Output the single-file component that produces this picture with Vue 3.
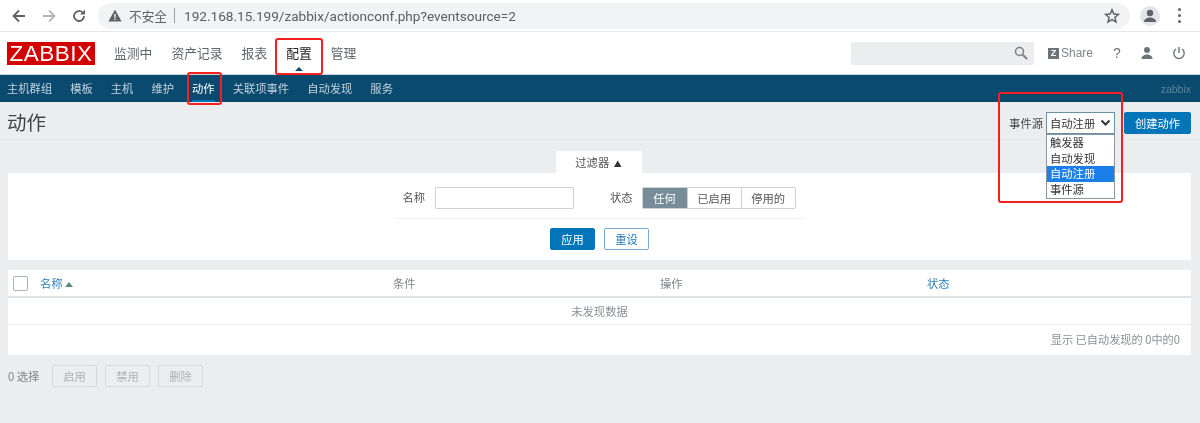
<script setup>
const mainNav = [
  { t: '监测中' }, { t: '资产记录' }, { t: '报表' }, { t: '配置', on: true }, { t: '管理' }
]
const subNav = [
  { t: '主机群组' }, { t: '模板' }, { t: '主机' }, { t: '维护' }, { t: '动作', on: true },
  { t: '关联项事件' }, { t: '自动发现' }, { t: '服务' }
]
const options = ['触发器', '自动发现', '自动注册', '事件源']
</script>

<template>
  <div class="page">
    <div class="chrome">
      <div class="navicons">
        <svg width="16" height="16" viewBox="0 0 16 16"><path d="M14 8H3M8 2.500 2.500 8 8 13.500" fill="none" stroke="#5f6368" stroke-width="1.800"/></svg>
        <svg width="16" height="16" viewBox="0 0 16 16"><path d="M2 8h11M8 2.500 13.500 8 8 13.500" fill="none" stroke="#b4b7ba" stroke-width="1.800"/></svg>
        <svg width="16" height="16" viewBox="0 0 16 16"><path d="M13 8a5 5 0 1 1-1.600-3.700" fill="none" stroke="#5f6368" stroke-width="1.800"/><path d="M14 1.500v5H9z" fill="#5f6368"/></svg>
      </div>
      <div class="omnibox">
        <svg class="warn" width="14" height="13" viewBox="0 0 14 13"><path d="M7 .5 13.600 12.500H.4z" fill="#5f6368"/><rect x="6.300" y="4.800" width="1.400" height="4" fill="#f1f3f4"/><rect x="6.300" y="9.600" width="1.400" height="1.400" fill="#f1f3f4"/></svg>
        <span class="insecure">不安全</span>
        <span class="sep"></span>
        <span class="url">192.168.15.199/zabbix/actionconf.php?eventsource=2</span>
        <svg class="star" width="16" height="16" viewBox="0 0 16 16"><path d="M8 1.800 9.800 6l4.600.4-3.500 3 1.100 4.500L8 11.500l-4 2.400 1.100-4.500-3.500-3L6.200 6z" fill="none" stroke="#5f6368" stroke-width="1.500"/></svg>
      </div>
      <div class="avatar">
        <svg width="14" height="14" viewBox="0 0 14 14"><circle cx="7" cy="4" r="3.200" fill="#5f6368"/><path d="M1 13c0-3 3-4.500 6-4.500s6 1.500 6 4.500z" fill="#5f6368"/></svg>
      </div>
      <div class="kebab"><i></i><i></i><i></i></div>
    </div>

    <header class="top">
      <div class="logo">ZABBIX</div>
      <nav class="mainnav">
        <a v-for="n in mainNav" :key="n.t" :class="{ on: n.on }">{{ n.t }}</a>
      </nav>
      <div class="topright">
        <div class="search">
          <svg width="14" height="14" viewBox="0 0 14 14"><circle cx="5.500" cy="5.500" r="4" fill="none" stroke="#7a7f83" stroke-width="1.500"/><path d="M8.500 8.500 13 13" stroke="#7a7f83" stroke-width="2"/></svg>
        </div>
        <span class="share"><b>Z</b>Share</span>
        <span class="help">?</span>
        <svg class="ticon" width="14" height="14" viewBox="0 0 14 14"><circle cx="7" cy="4" r="3" fill="#6d7479"/><path d="M1.500 13c0-3 2.500-4.500 5.500-4.500s5.500 1.500 5.500 4.500z" fill="#6d7479"/></svg>
        <svg class="ticon power" width="14" height="14" viewBox="0 0 14 14"><path d="M4 3a5.200 5.200 0 1 0 6 0" fill="none" stroke="#6d7479" stroke-width="1.400"/><path d="M7 1v6" stroke="#6d7479" stroke-width="1.400"/></svg>
      </div>
    </header>

    <nav class="subnav">
      <a v-for="n in subNav" :key="n.t" :class="{ on: n.on }">{{ n.t }}</a>
      <span class="user">zabbix</span>
    </nav>

    <div class="titlebar">
      <h1>动作</h1>
      <div class="controls">
        <span class="srclabel">事件源</span>
        <div class="selectwrap">
          <div class="select">
            <span>自动注册</span>
            <svg width="11" height="8" viewBox="0 0 11 8"><path d="M1.500 1.500 5.500 5.500 9.500 1.500" fill="none" stroke="#333" stroke-width="2"/></svg>
          </div>
          <ul class="dropdown">
            <li v-for="o in options" :key="o" :class="{ sel: o === '自动注册' }">{{ o }}</li>
          </ul>
        </div>
        <button class="primary create">创建动作</button>
      </div>
    </div>

    <main class="content">
      <div class="tabrow"><div class="tab">过滤器 <span class="tri">▲</span></div></div>
      <section class="filter">
        <div class="filterrow">
          <label class="lab">名称</label>
          <div class="input"></div>
          <label class="lab state">状态</label>
          <div class="seg">
            <span class="active">任何</span><span>已启用</span><span>停用的</span>
          </div>
        </div>
        <div class="filterbtns">
          <button class="primary">应用</button>
          <button class="ghost">重设</button>
        </div>
      </section>

      <section class="table">
        <div class="thead">
          <div class="col c0"><span class="check"></span><span class="link">名称 <i class="sort"></i></span></div>
          <div class="col c1">条件</div>
          <div class="col c2">操作</div>
          <div class="col c3 link">状态</div>
        </div>
        <div class="empty">未发现数据</div>
        <div class="tfoot">显示 已自动发现的 0中的0</div>
      </section>

      <div class="actions">
        <span class="count">0 选择</span>
        <button class="off">启用</button>
        <button class="off">禁用</button>
        <button class="off">删除</button>
      </div>
    </main>

    <div class="mark m1"></div>
    <div class="mark m2"></div>
    <div class="mark m3"></div>
  </div>
</template>

<style>
html, body { margin: 0; background: #ebedef; }
</style>

<style scoped>
.page {
  position: relative;
  width: 1200px;
  height: 423px;
  overflow: hidden;
  background: #ebedef;
  font-family: "Noto Sans CJK SC", "Liberation Sans", sans-serif;
  font-size: 11.300px;
  color: #555;
  filter: blur(0.3px);
}
.chrome {
  height: 32px;
  box-sizing: border-box;
  background: #fff;
  border-bottom: 1px solid #e4e6e8;
  display: flex;
  align-items: center;
  padding: 0 12px 0 10px;
}
.navicons { display: flex; gap: 14px; width: 88px; padding-left: 1px; box-sizing: border-box; }
.omnibox {
  width: 1032px;
  height: 26px;
  background: #f1f3f4;
  border-radius: 13px;
  display: flex;
  align-items: center;
  padding: 0 10px 0 10px;
  box-sizing: border-box;
  margin-right: 8px;
}
.insecure { margin-left: 7px; font-size: 12.700px; color: #5f6368; }
.sep { width: 1px; height: 15px; background: #9aa0a6; margin: 0 9px 0 7px; }
.url { font-family: "Roboto", "Liberation Sans", sans-serif; font-size: 13.600px; color: #5a5e62; }
.star { margin-left: auto; }
.avatar {
  width: 20px; height: 20px; border-radius: 50%; background: #e3e5e8;
  display: flex; align-items: center; justify-content: center;
  margin-left: 2px;
}
.kebab { display: flex; flex-direction: column; gap: 3px; margin-left: 18px; }
.kebab i { width: 3px; height: 3px; border-radius: 50%; background: #5f6368; }

.top {
  height: 42px;
  background: #fff;
  display: flex;
  align-items: center;
  padding-left: 7px;
}
.logo {
  width: 88px; height: 23px; background: #d40000; color: #fff;
  font-family: "Liberation Sans", sans-serif; font-size: 22.500px; line-height: 23px;
  text-align: center; letter-spacing: .5px;
}
.mainnav { display: flex; margin-left: 19px; gap: 19px; font-size: 12.800px; color: #5f666b; position: relative; top: -1px; }
.mainnav a { position: relative; }
.mainnav a.on { color: #222; }
.mainnav a.on::after {
  content: ""; position: absolute; left: 50%; margin-left: -4px; top: 24px;
  border: 4px solid transparent; border-top: 0; border-bottom: 4px solid #0b4a6f;
}
.topright { margin-left: auto; display: flex; align-items: center; padding-right: 14px; }
.search {
  width: 183px; height: 23px; background: #ebedef; border-radius: 2px; margin-right: 1px;
  display: flex; align-items: center; justify-content: flex-end; padding-right: 6px; box-sizing: border-box;
}
.share { display: flex; align-items: center; margin-left: 13px; color: #7d858a; font-family: "Liberation Sans", sans-serif; font-size: 12px; width: 48px; }
.share b { width: 11px; height: 11px; background: #6d7479; color: #fff; font-size: 9px; line-height: 11px; text-align: center; margin-right: 2px; }
.help { margin-left: 17px; color: #6d7479; font-family: "Liberation Sans", sans-serif; font-size: 14px; width: 8px; }
.ticon { margin-left: 19px; }
.power { margin-left: 18px; }

.subnav {
  height: 28px;
  box-sizing: border-box;
  background: #0b4a6f;
  border-top: 1px solid #c9d2d8;
  display: flex;
  align-items: center;
  padding-left: 7px;
  gap: 18px;
  color: #c3d2dc;
  font-size: 11.300px;
}
.subnav a { position: relative; line-height: 27px; }
.subnav a.on { color: #fff; }
.subnav a.on::after {
  content: ""; position: absolute; left: 0; right: 0; bottom: 0; height: 2px; background: #0275b8;
}
.user { margin-left: auto; margin-right: 9px; color: #5f8298; font-family: "Liberation Sans", sans-serif; font-size: 10.500px; }

.titlebar {
  height: 38px;
  box-sizing: border-box;
  display: flex;
  align-items: center;
  justify-content: space-between;
  padding: 0 9px 0 7px;
  border-bottom: 1px solid #e6e8ea;
}
h1 { margin: 2px 0 0; font-size: 19.500px; font-weight: 400; color: #444; line-height: 36px; }
.controls { display: flex; align-items: center; margin-top: 5px; }
.srclabel { margin-right: 3px; font-size: 11.300px; color: #444; }
.selectwrap { position: relative; z-index: 2; }
.select {
  width: 69px; height: 22px; box-sizing: border-box; background: #fff;
  border: 1px solid #6d8fa5;
  display: flex; align-items: center; justify-content: space-between; padding: 0 3px 0 3px;
  color: #333; font-size: 11.300px;
}
.dropdown {
  position: absolute; top: 22px; left: 0; width: 69px; height: 65px; box-sizing: border-box;
  margin: 0; padding: 0; list-style: none; background: #fff; border: 1px solid #8a979f;
  color: #333; font-size: 11.300px; line-height: 15.700px;
}
.dropdown li { padding-left: 3px; height: 15.700px; }
.dropdown li.sel { background: #1a7fe8; color: #fff; }
button { font-family: inherit; font-size: 11.300px; padding: 0; box-sizing: border-box; }
.primary { background: #0275b8; color: #fff; border: 1px solid #0275b8; border-radius: 2px; height: 22px; width: 45px; }
.create { width: 67px; margin-left: 9px; }

.content { padding: 0 9px 0 8px; }
.tabrow { display: flex; justify-content: center; padding: 11px 2px 0 0; }
.tab {
  width: 86px; height: 22px; background: #fff; text-align: center; line-height: 23px;
  border-radius: 2px 2px 0 0; box-sizing: border-box; color: #555; font-size: 11.300px;
}
.tri { font-size: 8px; color: #333; margin-left: 2px; }
.filter {
  height: 87px; background: #fff; box-sizing: border-box; padding-top: 14px; margin-bottom: 10px;
  display: flex; flex-direction: column; align-items: center;
}
.filterrow {
  width: 408px; height: 31px; display: flex; align-items: flex-start; justify-content: center;
  border-bottom: 1px solid #eef0f1; margin-right: 1px;
}
.lab { line-height: 21px; color: #555; font-size: 11.300px; }
.input {
  width: 139px; height: 22px; box-sizing: border-box; margin-left: 10px;
  border: 1px solid #cbd1d4; background: #fff; border-radius: 1px;
}
.state { margin-left: 36px; margin-right: 9px; }
.seg { display: flex; height: 22px; border: 1px solid #cbd1d4; box-sizing: border-box; border-radius: 2px; font-size: 11.300px; line-height: 20px; }
.seg span { width: 54px; text-align: center; border-left: 1px solid #cbd1d4; box-sizing: border-box; color: #555; }
.seg span:first-child { border-left: 0; width: 44px; }
.seg .active { background: #768d99; color: #fff; }
.filterbtns { display: flex; gap: 9px; margin-top: 9px; }
.ghost { width: 45px; height: 22px; background: #fff; border: 1px solid #7aa9cc; color: #1f7ab5; border-radius: 2px; }

.table { background: #fff; height: 85px; }
.thead {
  height: 28px; box-sizing: border-box; display: flex; align-items: center; position: relative;
  border-bottom: 2px solid #dfe3e5; font-size: 11.300px; color: #7f868a;
}
.col { white-space: nowrap; }
.c0 { width: 385px; display: flex; align-items: center; padding-left: 5px; box-sizing: border-box; }
.c1 { width: 267px; }
.c2 { width: 267px; }
.check { width: 15px; height: 15px; box-sizing: border-box; border: 1px solid #a9b2b7; border-radius: 2px; margin-right: 12px; }
.link { color: #2f7fb8; }
.sort {
  display: inline-block; border: 4px solid transparent; border-top: 0; border-bottom: 5px solid #5a8a80;
  vertical-align: 1px;
}
.empty {
  height: 27px; line-height: 26px; text-align: center; color: #8a9095; border-bottom: 1px solid #eef0f1;
  box-sizing: border-box; font-size: 11.300px;
}
.tfoot { height: 30px; line-height: 29px; text-align: right; padding-right: 11px; color: #8a9095; font-size: 11.200px; }

.actions { display: flex; align-items: center; margin-top: 10px; margin-left: -8px; padding-left: 8px; height: 22px; color: #7d858a; font-size: 11.300px; }
.count { width: 44px; }
.off {
  width: 45px; height: 22px; margin-right: 8px; background: #ebedef; border: 1px solid #d3d8db;
  border-radius: 2px; color: #adb3b7; font-size: 11.300px;
}

.mark { position: absolute; border: 2px solid #f51f1f; border-radius: 3px; box-sizing: border-box; pointer-events: none; z-index: 5; }
.m1 { left: 275px; top: 38px; width: 48px; height: 37px; }
.m2 { left: 187px; top: 72px; width: 35px; height: 33px; }
.m3 { left: 998px; top: 92px; width: 125px; height: 111px; }
</style>
